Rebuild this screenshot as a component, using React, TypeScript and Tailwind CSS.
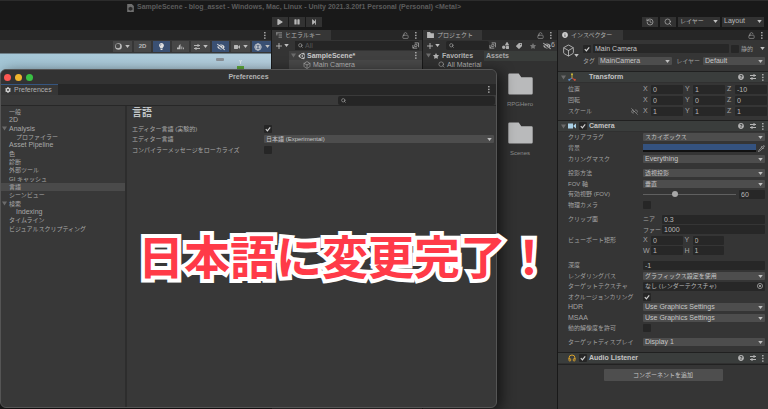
import * as React from "react"
import clsx from "clsx"
import { Box, Headphones, History, Link2Off, LockOpen, Pipette, Search } from "lucide-react"
import {
  FaCog,
  FaEyeSlash,
  FaInfoCircle,
  FaLightbulb,
  FaPause,
  FaPlay,
  FaQuestionCircle,
  FaShapes,
  FaStar,
  FaStepForward,
  FaTag,
  FaUnity,
  FaVideo,
} from "react-icons/fa"

const Caret = ({ className }: { className?: string }) => (
  <svg viewBox="0 0 6 4" className={clsx("h-[3px] w-[5px] shrink-0 fill-[#c0c0c0]", className)}>
    <path d="M0 0h6L3 4z" />
  </svg>
)

const Foldout = () => (
  <svg viewBox="0 0 6 6" className="h-[5px] w-[5px] shrink-0 fill-[#6b6b6b]">
    <path d="M0 0.5h6L3 5.5z" />
  </svg>
)

const Dots = ({ className }: { className?: string }) => (
  <button type="button" aria-label="menu" className={clsx("shrink-0", className)}>
    <svg viewBox="0 0 2 8" className="h-[7px] w-[2px] fill-[#b5b5b5]">
      <rect width="1.6" height="1.6" />
      <rect y="3.1" width="1.6" height="1.6" />
      <rect y="6.2" width="1.6" height="1.6" />
    </svg>
  </button>
)

const Folder = () => (
  <svg viewBox="0 0 25 22" className="h-[22px] w-[25px] fill-[#b9babb]">
    <path d="M1.5 0.5h9.2l2.6 3.8h10.2a1.2 1.2 0 0 1 1.2 1.2v14.8a1.2 1.2 0 0 1-1.2 1.2h-22a1.2 1.2 0 0 1-1.2-1.2V1.7a1.2 1.2 0 0 1 1.2-1.2z" />
  </svg>
)

const PresetIcon = () => (
  <svg viewBox="0 0 12 12" className="h-[6px] w-[6px] fill-none stroke-[#b5b5b5] stroke-2">
    <path d="M0 3h12M8 0v6M0 9h12M4 6v6" />
  </svg>
)

function Select({
  value,
  id,
  label,
  className,
  latin = false,
}: {
  value: string
  id?: string
  label?: string
  className?: string
  latin?: boolean
}) {
  return (
    <div className={clsx("relative h-[8px] min-w-0", className)}>
      <select
        id={id}
        aria-label={label}
        className={clsx(
          "block h-full w-full appearance-none rounded-[1px] bg-[#4d4d4d] pl-[2px] leading-[8px] text-[#c6c6c6]",
          latin ? "text-[7px]" : "text-[6px]"
        )}
      >
        <option>{value}</option>
      </select>
      <Caret className="pointer-events-none absolute right-[2px] top-[3px]" />
    </div>
  )
}

function CheckBox({ id, label, checked = false }: { id?: string; label?: string; checked?: boolean }) {
  return (
    <span className="relative block size-[8px] shrink-0">
      <input
        id={id}
        aria-label={label}
        type="checkbox"
        defaultChecked={checked}
        className="peer block size-full appearance-none rounded-[1px] bg-[#262626]"
      />
      <svg
        viewBox="0 0 8 8"
        className="pointer-events-none absolute inset-0 hidden fill-none stroke-[#d0d0d0] peer-checked:block"
      >
        <path d="M1.8 4.2l1.6 1.6L6.2 2.4" strokeWidth="1.2" />
      </svg>
    </span>
  )
}

function Field({
  value,
  id,
  label,
  className,
}: {
  value: string
  id?: string
  label?: string
  className?: string
}) {
  return (
    <input
      id={id}
      aria-label={label}
      defaultValue={value}
      className={clsx("h-[9px] min-w-0 rounded-[1px] bg-[#272727] pl-[2px] text-[7px] leading-[9px] text-[#b8b8b8]", className)}
    />
  )
}

function Tab({ icon, children, className }: { icon?: React.ReactNode; children: React.ReactNode; className?: string }) {
  return (
    <button
      type="button"
      className={clsx("flex h-full items-center gap-[3px] bg-[#363636] pl-[4px] text-[#b0b0b0]", className)}
    >
      {icon}
      {children}
    </button>
  )
}

function PanelTabs({ children, lock = true }: { children?: React.ReactNode; lock?: boolean }) {
  return (
    <div className="flex h-[10px] items-center bg-[#262626] pr-[5px] text-[6px]">
      {children}
      {lock && <LockOpen className="ml-auto mr-[6px] size-[7px] text-[#a8a8a8]" />}
      <Dots className={lock ? "" : "ml-auto"} />
    </div>
  )
}

function TopBar() {
  return (
    <header>
      <div className="flex h-[14px] items-center border-t border-[#2c2c2c] pl-[127px] text-[7px] font-bold text-[#5c5c5c]">
        <svg viewBox="0 0 10 12" className="mr-[3px] h-[8px] w-[7px] shrink-0">
          <path d="M0 0h7l3 3v9H0z" className="fill-[#6f6f6f]" />
          <path d="M5 4l3 1.6v3L5 10 2 8.600v-3z" className="fill-[#2a2a2a]" />
        </svg>
        <h1 className="whitespace-nowrap">
          SampleScene - blog_asset - Windows, Mac, Linux - Unity 2021.3.20f1 Personal (Personal) &lt;Metal&gt;
        </h1>
      </div>
      <div className="flex h-[16px] items-center pb-[1px] text-[#b8b8b8]">
        <div className="flex flex-1 justify-end gap-px">
          {[FaPlay, FaPause, FaStepForward].map((Icon, i) => (
            <button
              key={i}
              type="button"
              aria-label={["Play", "Pause", "Step"][i]}
              className="flex h-[10px] w-[16px] items-center justify-center bg-[#323232]"
            >
              <Icon className="size-[6px]" />
            </button>
          ))}
        </div>
        <div className="flex w-[446px] justify-end gap-[2px] pr-[4px]">
          <button type="button" aria-label="Undo history" className="flex h-[10px] w-[16px] items-center justify-center bg-[#323232]">
            <History className="size-[8px]" />
          </button>
          <button type="button" aria-label="Search" className="flex h-[10px] w-[16px] items-center justify-center bg-[#323232]">
            <Search className="size-[8px]" />
          </button>
          <button type="button" className="flex h-[10px] w-[42px] items-center justify-between bg-[#323232] px-[2px] text-[6px]">
            レイヤー
            <Caret />
          </button>
          <button type="button" className="flex h-[10px] w-[42px] items-center justify-between bg-[#323232] px-[2px] text-[7px]">
            Layout
            <Caret />
          </button>
        </div>
      </div>
    </header>
  )
}

function SceneButton({
  children,
  label,
  active = false,
  caret = false,
}: {
  children: React.ReactNode
  label: string
  active?: boolean
  caret?: boolean
}) {
  return (
    <button
      type="button"
      aria-label={label}
      className={clsx(
        "flex h-[11px] items-center justify-center gap-[3px] text-[6px] font-bold text-[#b8b8b8]",
        active ? "bg-[#3a5073]" : "bg-[#474747]",
        caret ? "w-[19px]" : "w-[17px]"
      )}
    >
      {children}
      {caret && <Caret />}
    </button>
  )
}

function ScenePanel() {
  return (
    <section className="flex min-w-0 flex-1 flex-col">
      <PanelTabs lock={false} />
      <div className="flex h-[13px] items-center justify-end gap-[2px] overflow-hidden bg-[#363636]">
        <SceneButton label="Draw mode" caret>
          <svg viewBox="0 0 8 8" className="size-[7px]">
            <circle cx="4" cy="4" r="3.800" className="fill-[#bdbdbd]" />
            <circle cx="3.4" cy="3.4" r="2.6" className="fill-[#474747]" />
          </svg>
        </SceneButton>
        <SceneButton label="2D">2D</SceneButton>
        <SceneButton label="Lighting" active>
          <FaLightbulb className="size-[7px] text-[#e0e0e0]" />
        </SceneButton>
        <SceneButton label="Audio">
          <svg viewBox="0 0 8 8" className="size-[7px] fill-[#b8b8b8]">
            <path d="M0 5h2V3l2-2v6H0zM5 4h1v3H5zM7 5h1v2H7z" />
          </svg>
        </SceneButton>
        <SceneButton label="Effects" caret>
          <PresetIcon />
        </SceneButton>
        <SceneButton label="Hidden objects" active>
          <FaEyeSlash className="size-[8px] text-[#dcdcdc]" />
        </SceneButton>
        <SceneButton label="Camera" caret>
          <FaVideo className="size-[6px]" />
        </SceneButton>
        <SceneButton label="Gizmos" active caret>
          <svg viewBox="0 0 10 10" className="size-[8px] fill-none stroke-[#dcdcdc]">
            <circle cx="5" cy="5" r="4" />
            <ellipse cx="5" cy="5" rx="1.800" ry="4" />
            <path d="M1 5h8" />
          </svg>
        </SceneButton>
      </div>
      <div className="h-[24px] border-t border-[#6e7f88] bg-gradient-to-r from-[#a4c6d6] to-[#b4cedd]">
        <svg viewBox="0 0 40 16" className="ml-auto mr-[17px] h-[16px] w-[40px]">
          <rect x="2" y="4" width="8" height="3" rx="1" className="fill-[#8b9197]" />
          <path d="M25.500 6l1 2 1-2M26.500 8v2" className="fill-none stroke-[#dce8ee]" />
          <rect x="23" y="12" width="7" height="4" className="fill-[#5faa3c]" />
        </svg>
      </div>
    </section>
  )
}

function SearchField({ placeholder, label, className }: { placeholder?: string; label: string; className?: string }) {
  return (
    <label className={clsx("flex h-[9px] min-w-0 items-center gap-[2px] rounded-[2px] bg-[#252525] pl-[3px]", className)}>
      <Search className="size-[5px] shrink-0 stroke-[3] text-[#a5a5a5]" />
      <input aria-label={label} placeholder={placeholder} className="w-full min-w-0 text-[7px] leading-[9px] placeholder:text-[#555]" />
    </label>
  )
}

const AddButton = () => (
  <button type="button" aria-label="Add" className="flex shrink-0 items-center gap-[2px]">
    <svg viewBox="0 0 7 7" className="size-[6px] stroke-[#bdbdbd]">
      <path d="M3.500 0v7M0 3.500h7" />
    </svg>
    <Caret />
  </button>
)

const PickIcon = () => (
  <svg viewBox="0 0 8 8" className="size-[7px] shrink-0 fill-none stroke-[#a0a0a0]">
    <path d="M3 1h4.500v5M1 7l2-2M1 3.500V7h5" />
    <circle cx="4.400" cy="3.800" r="1.400" />
  </svg>
)

function HierarchyPanel() {
  return (
    <section className="flex w-[150px] flex-col bg-[#343434]">
      <PanelTabs>
        <Tab
          className="w-[59px]"
          icon={
            <svg viewBox="0 0 7 7" className="size-[6px] stroke-[#a0a0a0]">
              <path d="M0 1h7M3 3.500h4M3 6h4M1 1v3" />
            </svg>
          }
        >
          ヒエラルキー
        </Tab>
      </PanelTabs>
      <div className="flex h-[11px] items-center gap-[6px] pl-[4px] pr-[3px]">
        <AddButton />
        <div className="flex flex-1 items-center bg-[#252525]">
          <SearchField label="Search hierarchy" placeholder="All" className="flex-1" />
          <PickIcon />
        </div>
      </div>
      <ul className="ml-[17px] text-[7px] leading-[8px] text-[#b4b4b4]">
        <li className="flex h-[9px] items-center bg-[#404040] pl-[2px] pr-[5px] font-bold text-[#c8c8c8]">
          <Foldout />
          <FaUnity className="ml-[2px] mr-px size-[8px]" />
          SampleScene*
          <Dots className="ml-auto" />
        </li>
        <li className="flex h-[9px] items-center bg-[#484848] pl-[14px]">
          <Box className="mr-[2px] size-[8px]" />
          Main Camera
        </li>
      </ul>
    </section>
  )
}

function ProjectPanel() {
  return (
    <section className="flex w-[134px] flex-col bg-[#313131]">
      <PanelTabs>
        <Tab
          className="w-[59px]"
          icon={
            <svg viewBox="0 0 8 7" className="h-[6px] w-[7px] fill-[#b8b8b8]">
              <path d="M0 0h3.500l1 1.500H8V7H0z" />
            </svg>
          }
        >
          プロジェクト
        </Tab>
      </PanelTabs>
      <div className="flex h-[11px] items-center pl-[4px] pr-[2px] text-[#b0b0b0]">
        <AddButton />
        <SearchField label="Search project" className="ml-[6px] flex-1" />
        <PickIcon />
        <FaShapes className="ml-[6px] size-[7px] shrink-0" />
        <FaTag className="ml-[7px] size-[6px] shrink-0 -scale-x-100" />
        <FaStar className="ml-[8px] size-[6px] shrink-0 text-[#777]" />
        <FaEyeSlash className="ml-[7px] size-[8px] shrink-0" />
        <span className="text-[7px]">6</span>
      </div>
      <div className="flex flex-1 text-[7px] leading-[8px]">
        <ul className="w-[61px] overflow-hidden whitespace-nowrap text-[#b0b0b0]">
          <li className="flex h-[9px] items-center pl-[3px] font-bold">
            <Foldout />
            <FaStar className="ml-[2px] mr-[3px] size-[6px]" />
            Favorites
          </li>
          <li className="flex h-[9px] items-center pl-[15px]">
            <Search className="mr-[2px] size-[7px] shrink-0" />
            All Material
          </li>
        </ul>
        <div className="flex-1 text-[#8c8c8c]">
          <div className="h-[10px] bg-[#3a3d3b] pl-[2px] font-bold leading-[10px] text-[#a8a8a8]">Assets</div>
          <ul className="flex flex-col gap-[13px] pr-px pt-[12px]">
            {["RPGHero", "Scenes"].map((name) => (
              <li key={name} className="flex flex-col items-center gap-[5px]">
                <Folder />
                <span className="h-[9px] text-[6px]">{name}</span>
              </li>
            ))}
          </ul>
        </div>
      </div>
    </section>
  )
}

function ComponentHeader({
  title,
  icon,
  toggle = false,
  foldout = true,
}: {
  title: string
  icon: React.ReactNode
  toggle?: boolean
  foldout?: boolean
}) {
  return (
    <div className="flex h-[12px] items-center border-y border-b-[#303030] border-t-[#202020] bg-[#3a3d3c] pl-[3px] pr-[4px]">
      <span className="w-[7px]">{foldout && <Foldout />}</span>
      <span className="w-[11px]">{icon}</span>
      <span className="w-[10px]">{toggle && <CheckBox label={`Enable ${title}`} checked />}</span>
      <h2 className="text-[7px] font-bold text-[#c4c4c4]">{title}</h2>
      <div className="ml-auto flex items-center gap-[6px] text-[#b5b5b5]">
        <FaQuestionCircle className="size-[6px]" />
        <PresetIcon />
        <Dots />
      </div>
    </div>
  )
}

function Row({ label, id, latin = false, children }: { label: string; id?: string; latin?: boolean; children: React.ReactNode }) {
  return (
    <div className="flex h-[10px] items-center">
      <label htmlFor={id} className={clsx("w-[75px] shrink-0 whitespace-nowrap", latin && "text-[7px]")}>
        {label}
      </label>
      {children}
    </div>
  )
}

function Axis({ axis, value, name }: { axis: string; value: string; name: string }) {
  return (
    <label className="flex flex-1 items-center text-[7px]">
      <span className="w-[8px] shrink-0">{axis}</span>
      <Field value={value} label={`${name} ${axis}`} className="w-full" />
    </label>
  )
}

const transform = [
  { name: "位置", values: ["0", "1", "-10"] },
  { name: "回転", values: ["0", "0", "0"] },
  { name: "スケール", values: ["1", "1", "1"] },
]

function InspectorPanel() {
  return (
    <section className="flex w-[210px] flex-col bg-[#353535] text-[6px] leading-[8px] text-[#a2a2a2]">
      <PanelTabs>
        <Tab className="w-[65px]" icon={<FaInfoCircle className="size-[6px] text-[#d0d0d0]" />}>
          インスペクター
        </Tab>
      </PanelTabs>
      <div className="flex h-[31px] gap-[4px] pl-[4px] pr-[3px] pt-[4px]">
        <div className="flex items-end self-start">
          <Box className="size-[13px] stroke-[1.5] text-[#c4c4c4]" />
          <Caret className="-ml-[1px]" />
        </div>
        <div className="flex flex-1 flex-col gap-[4px]">
          <div className="flex items-center gap-[2px]">
            <CheckBox label="Active" checked />
            <Field label="Name" value="Main Camera" className="flex-1 text-[#c8c8c8]" />
            <CheckBox id="static" />
            <label htmlFor="static" className="mr-[5px]">
              静的
            </label>
            <Caret />
          </div>
          <div className="flex items-center gap-[3px]">
            <label htmlFor="tag">タグ</label>
            <Select id="tag" value="MainCamera" latin className="w-[74px]" />
            <label htmlFor="layer" className="ml-auto">
              レイヤー
            </label>
            <Select id="layer" value="Default" latin className="w-[62px]" />
          </div>
        </div>
      </div>

      <ComponentHeader
        title="Transform"
        icon={
          <svg viewBox="0 0 8 8" className="size-[8px]">
            <path d="M4 1v4" className="stroke-[#c8b53a]" />
            <path d="M4 5L1 7" className="stroke-[#5d8fd0]" />
            <path d="M4 5l3 2" className="stroke-[#d0503a]" />
            <circle cx="4" cy="1.200" r="1" className="fill-[#c8b53a]" />
            <circle cx="1.200" cy="6.800" r="1" className="fill-[#5d8fd0]" />
            <circle cx="6.800" cy="6.800" r="1.100" className="fill-[#d0503a]" />
          </svg>
        }
      />
      <div className="flex min-h-[37px] flex-col gap-px pl-[10px] pr-[1px] pt-[1px]">
        {transform.map((row) => (
          <Row key={row.name} label={row.name}>
            <div className="relative flex flex-1 gap-[2px]">
              {row.name === "スケール" && <Link2Off className="absolute -left-[12px] top-px size-[7px]" />}
              {row.values.map((value, i) => (
                <Axis key={i} axis={"XYZ"[i]} value={value} name={row.name} />
              ))}
            </div>
          </Row>
        ))}
      </div>

      <ComponentHeader
        title="Camera"
        toggle
        icon={
          <svg viewBox="0 0 8 6" className="h-[6px] w-[8px] fill-[#a9d0e6]">
            <path d="M0 0.500h5v5H0zM5.500 2.500L8 0.500v5L5.500 3.500z" />
          </svg>
        }
      />
      <div className="flex flex-col gap-[4px] pb-[5px] pl-[10px] pr-[3px]">
        <div className="flex min-h-[32px] flex-col justify-between">
          <Row id="clear" label="クリアフラグ">
            <Select id="clear" value="スカイボックス" className="flex-1" />
          </Row>
          <Row label="背景">
            <button type="button" aria-label="背景" className="h-[8px] flex-1 border-b-2 border-[#111] bg-[#34527f]" />
            <Pipette className="ml-[2px] size-[7px] text-[#c4c4c4]" />
          </Row>
          <Row id="culling" label="カリングマスク">
            <Select id="culling" value="Everything" latin className="flex-1" />
          </Row>
        </div>
        <div className="flex min-h-[42px] flex-col justify-between">
          <Row id="projection" label="投影方法">
            <Select id="projection" value="透視投影" className="flex-1" />
          </Row>
          <Row id="axis" label="FOV 軸">
            <Select id="axis" value="垂直" className="flex-1" />
          </Row>
          <Row id="fov" label="有効視野 (FOV)">
            <input
              id="fov"
              type="range"
              min={0}
              max={180}
              defaultValue={60}
              className="h-[6px] min-w-0 flex-1 appearance-none bg-[linear-gradient(#606060,#606060)] bg-[length:100%_1px] bg-center bg-no-repeat [&::-webkit-slider-thumb]:size-[6px] [&::-webkit-slider-thumb]:appearance-none [&::-webkit-slider-thumb]:rounded-full [&::-webkit-slider-thumb]:bg-[#a8a8a8]"
            />
            <Field value="60" label="FOV value" className="ml-[3px] w-[26px]" />
          </Row>
          <Row id="physical" label="物理カメラ">
            <CheckBox id="physical" />
          </Row>
        </div>
        <div className="flex min-h-[42px] flex-col justify-between">
          <Row label="クリップ面">
            <label htmlFor="near" className="w-[19px]">
              ニア
            </label>
            <Field id="near" value="0.3" className="flex-1" />
          </Row>
          <Row label="">
            <label htmlFor="far" className="w-[19px]">
              ファー
            </label>
            <Field id="far" value="1000" className="flex-1" />
          </Row>
          {[
            ["X", "0", "Y", "0"],
            ["W", "1", "H", "1"],
          ].map(([a, av, b, bv], i) => (
            <Row key={a} label={i === 0 ? "ビューポート矩形" : ""}>
              <div className="flex flex-1 gap-[2px] pr-[41px]">
                <Axis axis={a} value={av} name="ビューポート" />
                <Axis axis={b} value={bv} name="ビューポート" />
              </div>
            </Row>
          ))}
        </div>
        <div className="flex min-h-[73px] flex-col justify-between">
          <Row id="depth" label="深度">
            <Field id="depth" value="-1" className="flex-1" />
          </Row>
          <Row id="path" label="レンダリングパス">
            <Select id="path" value="グラフィックス設定を使用" className="flex-1" />
          </Row>
          <Row id="texture" label="ターゲットテクスチャ">
            <button
              id="texture"
              type="button"
              className="flex h-[9px] flex-1 items-center justify-between rounded-[1px] bg-[#272727] px-[2px] text-[#b8b8b8]"
            >
              なし (レンダーテクスチャ)
              <svg viewBox="0 0 8 8" className="size-[6px] fill-none stroke-[#b0b0b0]">
                <circle cx="4" cy="4" r="3.400" />
                <circle cx="4" cy="4" r="1" className="fill-[#b0b0b0]" />
              </svg>
            </button>
          </Row>
          <Row id="occlusion" label="オクルージョンカリング">
            <CheckBox id="occlusion" checked />
          </Row>
          <Row id="hdr" label="HDR" latin>
            <Select id="hdr" value="Use Graphics Settings" latin className="flex-1" />
          </Row>
          <Row id="msaa" label="MSAA" latin>
            <Select id="msaa" value="Use Graphics Settings" latin className="flex-1" />
          </Row>
          <Row id="dynamic" label="動的解像度を許可">
            <CheckBox id="dynamic" />
          </Row>
        </div>
        <Row id="display" label="ターゲットディスプレイ">
          <Select id="display" value="Display 1" latin className="flex-1" />
        </Row>
      </div>

      <ComponentHeader
        title="Audio Listener"
        toggle
        foldout={false}
        icon={<Headphones className="size-[8px] stroke-[3] text-[#d6a02c]" />}
      />
      <div className="flex flex-1 items-start justify-center border-t border-[#222] pt-[4px]">
        <button type="button" className="h-[12px] w-[119px] rounded-[1px] bg-[#4e4e4e] text-[#c4c4c4]">
          コンポーネントを追加
        </button>
      </div>
    </section>
  )
}

const categories: { name: string; latin?: boolean; group?: boolean; nested?: boolean }[] = [
  { name: "一般" },
  { name: "2D", latin: true },
  { name: "Analysis", latin: true, group: true },
  { name: "プロファイラー", nested: true },
  { name: "Asset Pipeline", latin: true },
  { name: "色" },
  { name: "診断" },
  { name: "外部ツール" },
  { name: "GI キャッシュ" },
  { name: "言語" },
  { name: "シーンビュー" },
  { name: "検索", group: true },
  { name: "Indexing", latin: true, nested: true },
  { name: "タイムライン" },
  { name: "ビジュアルスクリプティング" },
]

function PreferencesWindow() {
  const [selected, setSelected] = React.useState("言語")

  return (
    <section className="absolute bottom-px left-0 right-[271px] top-[69px] flex flex-col overflow-hidden rounded-[6px] border border-[#555] bg-[#383838] text-[6px] leading-[8px] text-[#a8a8a8] shadow-[4px_3px_14px_rgba(0,0,0,0.6)]">
      <div className="flex h-[14px] items-center bg-[#333] px-[3px]">
        <div className="flex flex-1 gap-[4px]">
          <button type="button" aria-label="Close" className="size-[7px] rounded-full bg-[#fc5753]" />
          <button type="button" aria-label="Minimize" className="size-[7px] rounded-full bg-[#f0b52d]" />
          <button type="button" aria-label="Zoom" className="size-[7px] rounded-full bg-[#39c144]" />
        </div>
        <h2 className="text-[7px] font-bold text-[#b4b4b4]">Preferences</h2>
        <div className="flex-1" />
      </div>
      <div className="flex h-[11px] items-center bg-[#272727] pr-[6px] text-[7px]">
        <Tab className="w-[57px] border-t border-[#35557f]" icon={<FaCog className="size-[6px] text-[#d0d0d0]" />}>
          Preferences
        </Tab>
        <Dots className="ml-auto" />
      </div>
      <div className="flex h-[11px] items-center justify-end border-b border-[#272727] bg-[#3a3a3a] pr-px">
        <SearchField label="Search preferences" className="w-[157px]" />
      </div>
      <div className="flex flex-1">
        <nav className="w-[126px] border-r-2 border-[#2d2d2d] pt-[2px]">
          <ul className="flex h-[125px] flex-col">
            {categories.map((item) => (
              <li key={item.name} className="flex min-h-0 flex-1">
                <button
                  type="button"
                  onClick={() => setSelected(item.name)}
                  className={clsx(
                    "flex w-full items-center pl-[1px] text-left",
                    item.latin && "text-[7px]",
                    selected === item.name && "bg-[#4a4a4a]"
                  )}
                >
                  <span className={item.nested ? "w-[14px]" : "w-[7px]"}>{item.group && <Foldout />}</span>
                  {item.name}
                </button>
              </li>
            ))}
          </ul>
        </nav>
        <div className="min-w-0 flex-1 pl-[5px] pr-[2px] pt-[2px]">
          <h3 className="text-[10px] font-bold leading-[10px] text-[#c0c4c6]">{selected}</h3>
          <div className="flex flex-col gap-[2px] pt-[6px]">
            <div className="flex h-[9px] items-center">
              <label htmlFor="experimental" className="w-[132px] shrink-0">
                エディター言語 (実験的)
              </label>
              <CheckBox id="experimental" checked />
            </div>
            <div className="flex h-[8px] items-center">
              <label htmlFor="language" className="w-[132px] shrink-0">
                エディター言語
              </label>
              <Select id="language" value="日本語 (Experimental)" className="flex-1" />
            </div>
            <div className="flex h-[9px] items-center">
              <label htmlFor="localize" className="w-[132px] shrink-0">
                コンパイラーメッセージをローカライズ
              </label>
              <CheckBox id="localize" />
            </div>
          </div>
        </div>
      </div>
    </section>
  )
}

export default function App() {
  return (
    <main className="relative flex min-h-screen flex-col overflow-hidden bg-[#191919] font-['Liberation_Sans','Noto_Sans_CJK_JP',sans-serif]">
      <TopBar />
      <div className="flex flex-1 gap-[1px]">
        <ScenePanel />
        <HierarchyPanel />
        <ProjectPanel />
        <InspectorPanel />
      </div>
      <PreferencesWindow />
      <p className="absolute left-[138px] top-[230px] whitespace-nowrap text-[46px] font-bold leading-[56px] text-[#ff3a48] [-webkit-text-stroke:8px_white] [paint-order:stroke]">
        日本語に変更完了！
      </p>
    </main>
  )
}
